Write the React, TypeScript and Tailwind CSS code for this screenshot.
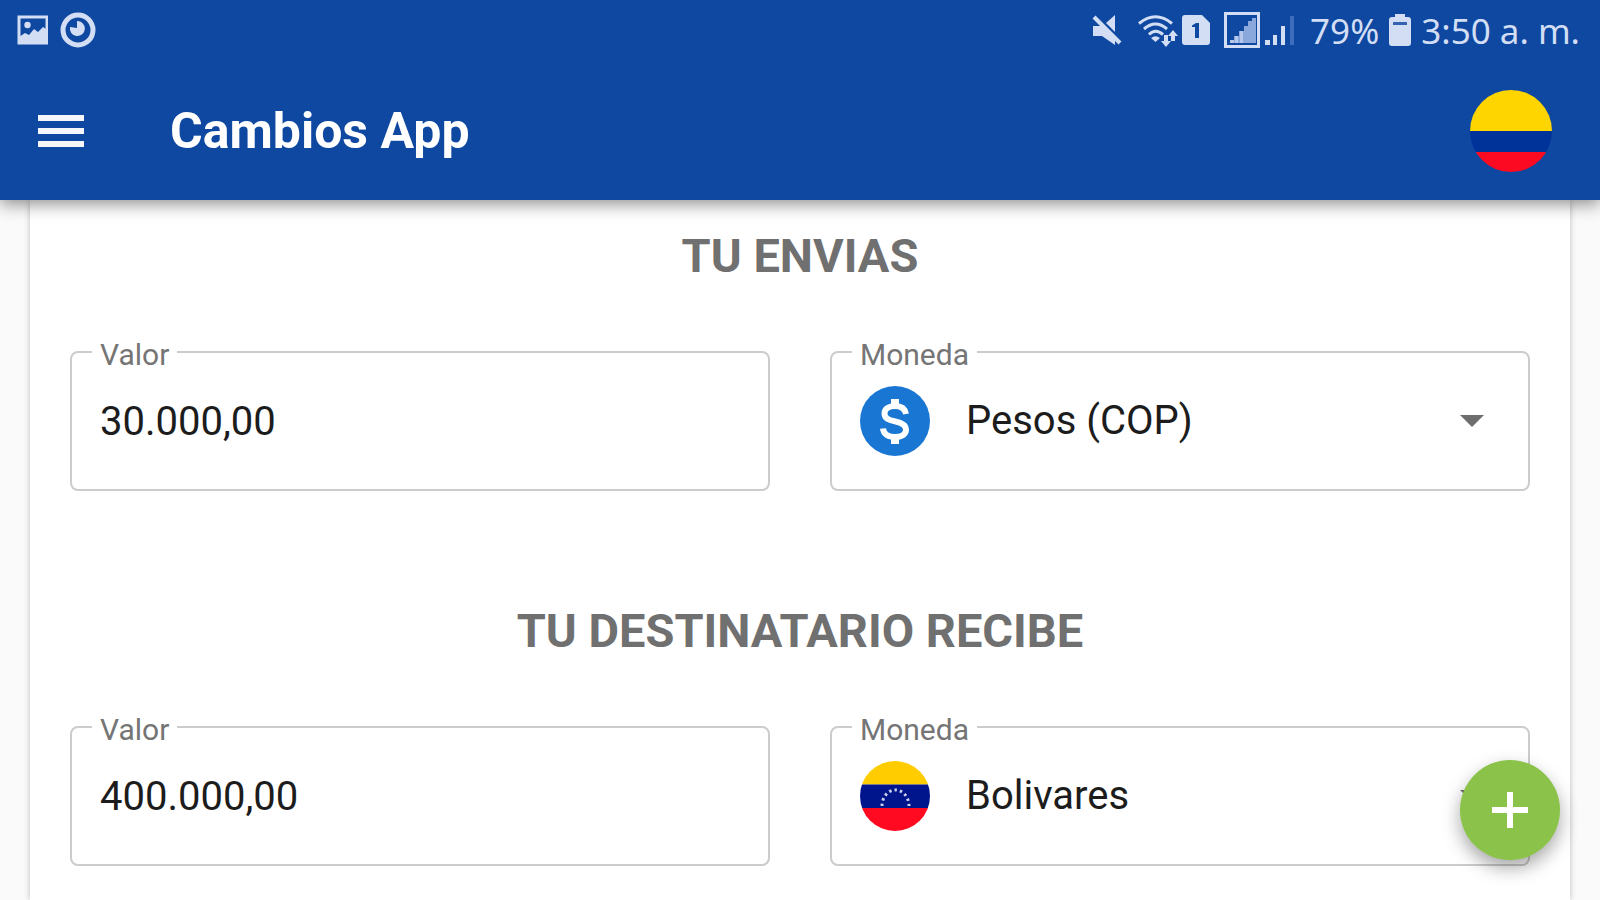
import { useId, useState, type ReactNode } from "react";

function StatusBar() {
  return (
    <div className="flex h-15 items-center justify-between pl-4 pr-5 text-[#d3def5]">
      <div className="flex items-center gap-3">
        <svg className="h-8 w-8" viewBox="0 0 32 32" aria-hidden="true">
          <rect x="3" y="3" width="28" height="26" fill="none" stroke="currentColor" strokeWidth="3" />
          <circle cx="11.5" cy="11" r="3.2" fill="currentColor" />
          <path d="M3 23l6-4 4 2 5-6 4 3 5-5 3 2v15H3z" fill="currentColor" />
        </svg>
        <svg className="h-9 w-9" viewBox="0 0 36 36" aria-hidden="true">
          <circle cx="18" cy="18" r="15" fill="none" stroke="currentColor" strokeWidth="5" />
          <path d="M17 16V9a7.500 7.500 0 1 1-7 6z" fill="currentColor" />
        </svg>
      </div>

      <div className="flex items-center gap-[14px]">
        <svg className="h-8 w-8" viewBox="0 0 32 32" aria-hidden="true">
          <path d="M14 9l9-8v17z" fill="currentColor" />
          <path d="M1 12h9l13 12v7L10 22H1z" fill="currentColor" />
          <path d="M2 3l26 26" stroke="currentColor" strokeWidth="4" />
        </svg>
        <div className="flex items-center gap-1">
          <svg className="h-9 w-10" viewBox="0 0 40 36" aria-hidden="true">
            <g fill="none" stroke="currentColor" strokeWidth="3">
              <path d="M1 11.500Q17.500-2 34 11.500" />
              <path d="M6 17Q17.500 7 29 17" />
              <path d="M11 22.500Q17.500 16 25 22.500" />
            </g>
            <path d="M13 26q4.500-3.500 9 0l-4.500 4z" fill="currentColor" />
            <path d="M26 23h4v6h3l-5 6-5-6h3zM33 29v-5h-3l5-6 5 6h-3v5z" fill="currentColor" />
          </svg>
          <svg className="h-8 w-7" viewBox="0 0 28 32" aria-hidden="true">
            <path d="M3 1h17l8 8v19a3 3 0 0 1-3 3H3a3 3 0 0 1-3-3V4a3 3 0 0 1 3-3z" fill="currentColor" />
            <path d="M10 11.500l4-2.500h3v15h-4V13h-3z" fill="#0f48a1" />
          </svg>
        </div>
        <div className="flex items-center gap-1">
          <svg className="h-9 w-9" viewBox="0 0 36 36" aria-hidden="true">
            <rect x="1.500" y="1.500" width="33" height="33" fill="none" stroke="currentColor" strokeWidth="3" />
            <path d="M6 31v-3h4v-4h5v-5h5v-5h4V9h4V6h4v25z" fill="#8aa8dc" />
            <path d="M6 28h4v3H6zM11 24h3v7h-3zM16 19h3v12h-3z" fill="#b5c8ec" />
          </svg>
          <svg className="h-8 w-8" viewBox="0 0 32 32" aria-hidden="true">
            <path d="M1 26h5v5H1zM9 21h4v10H9zM17 12h4v19h-4z" fill="currentColor" />
            <path d="M26 2h4v29h-4z" fill="#3f6dbb" />
          </svg>
        </div>
        <div className="flex items-center gap-[10px] font-['Noto_Sans',sans-serif] text-[35px] leading-none">
          <span>79%</span>
          <svg className="h-8 w-[22px]" viewBox="0 0 22 32" aria-hidden="true">
            <path d="M6 0h10v3h3a3 3 0 0 1 3 3v23a3 3 0 0 1-3 3H3a3 3 0 0 1-3-3V6a3 3 0 0 1 3-3h3z" fill="currentColor" />
            <path d="M4 8h14v3H4z" fill="#3463b3" />
          </svg>
          <span>3:50 a. m.</span>
        </div>
      </div>
    </div>
  );
}

function ColombiaFlag() {
  return (
    <span className="flex h-full w-full flex-col overflow-hidden rounded-full">
      <span className="flex-2 bg-[#ffd500]" />
      <span className="flex-1 bg-[#003399]" />
      <span className="flex-1 bg-[#fb0a22]" />
    </span>
  );
}

function VenezuelaFlag() {
  return (
    <svg className="h-full w-full rounded-full" viewBox="0 0 70 70" aria-hidden="true">
      <path d="M0 0h70v23.500H0z" fill="#ffcc00" />
      <path d="M0 23.500h70v23.500H0z" fill="#00148c" />
      <path d="M0 47h70v23H0z" fill="#ff0a20" />
      <path
        d="M22 45A13.500 16 0 1 1 49 45"
        fill="none"
        stroke="#c9d0ea"
        strokeWidth="3"
        strokeDasharray="2.500 3"
      />
    </svg>
  );
}

function DollarIcon() {
  return (
    <svg className="h-full w-full" viewBox="0 0 70 70" aria-hidden="true">
      <circle cx="35" cy="35" r="35" fill="#1976d2" />
      <path d="M31 13h8v8h-8zM31 49h8v9h-8z" fill="#fff" />
      <path
        d="M46 28C45 22.500 41 20 35 20c-6 0-10.500 2.800-10.500 7.500 0 4.800 4 6.300 10.500 7.900 7 1.700 11 3.500 11 8.400 0 4.600-4.500 7.200-11 7.200-7 0-11.500-3-12-8.500"
        fill="none"
        stroke="#fff"
        strokeWidth="6"
      />
    </svg>
  );
}

const FIELD_BOX = "relative flex h-35 items-center rounded-lg border-2 border-[#cccccc] px-7";
const FIELD_LABEL = "absolute -top-4 left-5 bg-white px-2 text-[30px] leading-9 text-[#757575]";

function AmountField({ initial }: { initial: string }) {
  const id = useId();
  const [value, setValue] = useState(initial);

  return (
    <div className={FIELD_BOX}>
      <label htmlFor={id} className={FIELD_LABEL}>Valor</label>
      <input
        id={id}
        type="text"
        inputMode="decimal"
        value={value}
        onChange={(e) => setValue(e.target.value)}
        className="h-full w-full min-w-0 bg-transparent text-[40px] text-[#1c1c1c] outline-none"
      />
    </div>
  );
}

function CurrencyField({ option, icon }: { option: string; icon: ReactNode }) {
  const id = useId();

  return (
    <div className={FIELD_BOX}>
      <label htmlFor={id} className={FIELD_LABEL}>Moneda</label>
      <span className="mr-9 h-[70px] w-[70px] shrink-0">{icon}</span>
      <select
        id={id}
        className="h-full min-w-0 flex-1 appearance-none bg-transparent text-[40px] text-[#1c1c1c] outline-none"
      >
        <option>{option}</option>
      </select>
      <svg
        className="pointer-events-none absolute right-11 h-3 w-6"
        viewBox="0 0 24 12"
        aria-hidden="true"
      >
        <path d="M0 0h24L12 12z" fill="#6e6e6e" />
      </svg>
    </div>
  );
}

const SECTIONS = [
  { title: "TU ENVIAS", amount: "30.000,00", currency: "Pesos (COP)", icon: <DollarIcon /> },
  { title: "TU DESTINATARIO RECIBE", amount: "400.000,00", currency: "Bolivares", icon: <VenezuelaFlag /> },
];

export default function App() {
  return (
    <div className="flex min-h-screen flex-col bg-[#fafafa] font-[Roboto,sans-serif]">
      <header className="relative z-10 bg-[#0f48a1] shadow-[0_4px_16px_rgba(0,0,0,0.45)]">
        <StatusBar />
        <div className="flex h-35 items-center pl-9 pr-12 pt-0.5">
          <button type="button" aria-label="Abrir menú" className="cursor-pointer">
            <svg className="h-8 w-12" viewBox="0 0 48 32" aria-hidden="true">
              <path d="M2 0h46v6H2zM2 13h46v6H2zM2 26h46v6H2z" fill="#f4f6fb" />
            </svg>
          </button>
          <h1 className="ml-[86px] flex-1 text-[50px] font-bold leading-none text-white">Cambios App</h1>
          <button type="button" aria-label="Colombia" className="h-[82px] w-[82px] cursor-pointer">
            <ColombiaFlag />
          </button>
        </div>
      </header>

      <main className="mx-[30px] flex flex-1 flex-col gap-28 bg-white px-10 pb-8 pt-7 shadow-[0_0_6px_rgba(0,0,0,0.25)]">
        {SECTIONS.map((section) => (
          <section key={section.title}>
            <h2 className="text-center text-[47px] font-bold leading-14 text-[#707070]">
              {section.title}
            </h2>
            <div className="mt-[67px] grid grid-cols-2 gap-15">
              <AmountField initial={section.amount} />
              <CurrencyField option={section.currency} icon={section.icon} />
            </div>
          </section>
        ))}
      </main>

      <button
        type="button"
        aria-label="Agregar"
        className="fixed bottom-10 right-10 z-20 flex h-25 w-25 cursor-pointer items-center justify-center rounded-full bg-[#8bc34a] shadow-[0_8px_18px_rgba(0,0,0,0.35)]"
      >
        <svg className="h-9 w-9" viewBox="0 0 36 36" aria-hidden="true">
          <path d="M15 0h6v15h15v6H21v15h-6V21H0v-6h15z" fill="#fff" />
        </svg>
      </button>
    </div>
  );
}
